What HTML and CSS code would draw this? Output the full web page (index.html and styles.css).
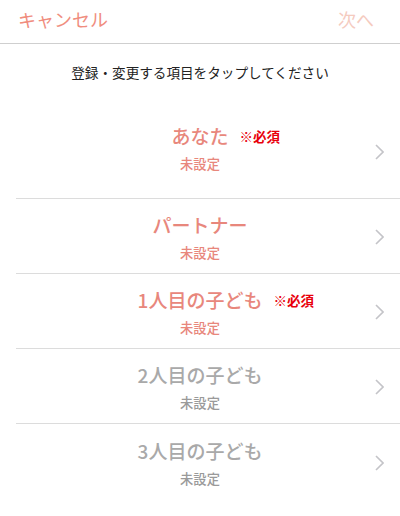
FILE: index.html
```html
<!DOCTYPE html>
<html lang="ja">
<head>
<meta charset="utf-8">
<link rel="stylesheet" href="styles.css">
</head>
<body>
<div class="screen">
  <header class="nav">
    <span class="nav-cancel">キャンセル</span>
    <span class="nav-next">次へ</span>
  </header>
  <p class="lead">登録・変更する項目をタップしてください</p>
  <ul class="list">
    <li class="row row-first">
      <div class="row-body">
        <div class="title active">あなた<span class="req">※必須</span></div>
        <div class="status active">未設定</div>
      </div>
      <svg class="chev" viewBox="0 0 9 16"><path d="M1 1 L8 8 L1 15" fill="none" stroke="#c4c4c8" stroke-width="1.6"/></svg>
    </li>
    <li class="row">
      <div class="row-body">
        <div class="title active">パートナー</div>
        <div class="status active">未設定</div>
      </div>
      <svg class="chev" viewBox="0 0 9 16"><path d="M1 1 L8 8 L1 15" fill="none" stroke="#c4c4c8" stroke-width="1.6"/></svg>
    </li>
    <li class="row">
      <div class="row-body">
        <div class="title active">1人目の子ども<span class="req">※必須</span></div>
        <div class="status active">未設定</div>
      </div>
      <svg class="chev" viewBox="0 0 9 16"><path d="M1 1 L8 8 L1 15" fill="none" stroke="#c4c4c8" stroke-width="1.6"/></svg>
    </li>
    <li class="row">
      <div class="row-body">
        <div class="title muted">2人目の子ども</div>
        <div class="status muted">未設定</div>
      </div>
      <svg class="chev" viewBox="0 0 9 16"><path d="M1 1 L8 8 L1 15" fill="none" stroke="#c4c4c8" stroke-width="1.6"/></svg>
    </li>
    <li class="row row-last">
      <div class="row-body">
        <div class="title muted">3人目の子ども</div>
        <div class="status muted">未設定</div>
      </div>
      <svg class="chev" viewBox="0 0 9 16"><path d="M1 1 L8 8 L1 15" fill="none" stroke="#c4c4c8" stroke-width="1.6"/></svg>
    </li>
  </ul>
</div>
</body>
</html>
```
FILE: styles.css
```css
* { box-sizing: border-box; }
html, body {
  margin: 0;
  padding: 0;
  background: #fff;
}
body {
  font-family: "Noto Sans CJK JP", "Noto Sans", sans-serif;
  width: 400px;
  height: 516px;
  overflow: hidden;
}
.screen {
  display: flex;
  flex-direction: column;
}
.nav {
  height: 44px;
  display: flex;
  justify-content: space-between;
  align-items: center;
  padding: 0 26px 5px 18px;
  border-bottom: 1px solid #cfcfcf;
}
.nav-cancel {
  font-size: 18px;
  color: #f08d7e;
  line-height: 1;
}
.nav-next {
  font-size: 18px;
  color: #f5cbbf;
  line-height: 1;
}
.lead {
  margin: 0;
  height: 59px;
  padding-top: 19px;
  text-align: center;
  font-size: 13.6px;
  line-height: 18px;
  color: #222;
}
.list {
  list-style: none;
  margin: 0;
  padding: 0 0 0 16px;
}
.row {
  position: relative;
  height: 75px;
  display: flex;
  align-items: center;
  border-bottom: 1px solid #dcdcdc;
}
.row-first { height: 96px; }
.row-last { border-bottom: none; }
.row-body {
  flex: 1;
  margin-left: -16px;
  display: flex;
  flex-direction: column;
  align-items: center;
  gap: 8px;
  padding-top: 3px;
}
.row-first .row-body {
  padding-top: 0;
  padding-bottom: 5px;
}
.title {
  position: relative;
  font-size: 19px;
  font-weight: 500;
  line-height: 23px;
}
.req {
  position: absolute;
  left: 100%;
  margin-left: 11px;
  top: 3px;
  font-size: 13.5px;
  font-weight: 700;
  color: #e8000b;
  white-space: nowrap;
  line-height: 18px;
}
.status {
  font-size: 13.3px;
  font-weight: 500;
  line-height: 18px;
}
.active { color: #e8877c; }
.muted { color: #a9a9a9; }
.status.muted { color: #9a9a9a; }
.chev {
  position: absolute;
  right: 16px;
  top: 50%;
  width: 9px;
  height: 16px;
  margin-top: -7px;
}
```
